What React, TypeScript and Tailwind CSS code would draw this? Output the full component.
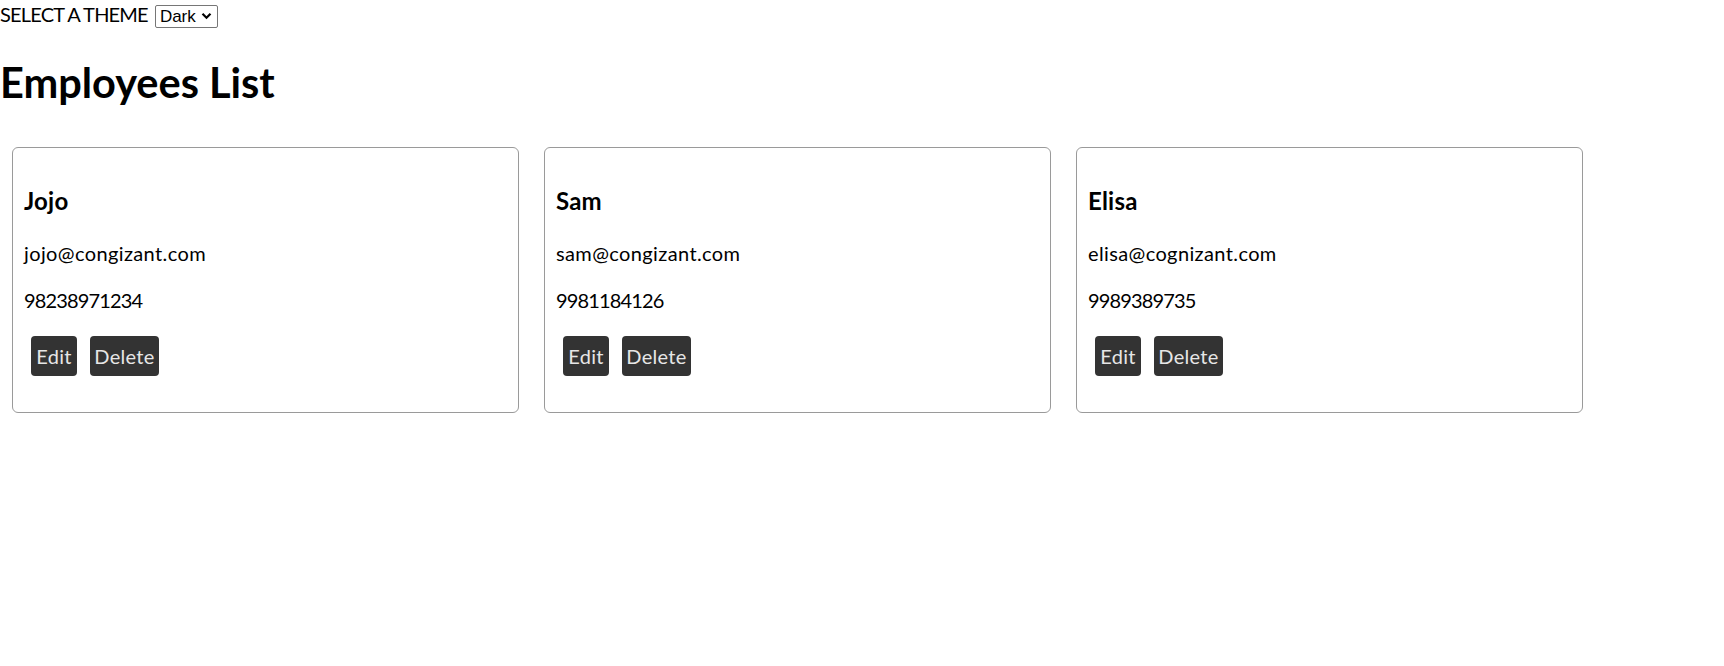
import React from "react";

const employees = [
  { name: "Jojo", email: "jojo@congizant.com", phone: "98238971234" },
  { name: "Sam", email: "sam@congizant.com", phone: "9981184126" },
  { name: "Elisa", email: "elisa@cognizant.com", phone: "9989389735" },
];

function Card({ e }: { e: (typeof employees)[number] }) {
  return (
    <div className="w-[507px] shrink-0 rounded-[6px] border border-[#9a9a9a] px-[11px] pt-[39px] pb-[36px]">
      <h3 className="text-[24px] leading-[28px] font-bold tracking-[0.2px]">{e.name}</h3>
      <p className="mt-[24px] text-[20px] leading-[28px] tracking-[0.38px]">{e.email}</p>
      <p className="mt-[19px] text-[20px] leading-[28px] tracking-[-0.85px]">{e.phone}</p>
      <div className="mt-[22px] flex gap-[13px] pl-[7px]">
        <button className="h-[40px] w-[46px] rounded-[4px] bg-[#333333] text-[20px] leading-[40px] tracking-[0.3px] text-[#e6e6e6]">
          Edit
        </button>
        <button className="h-[40px] w-[69px] rounded-[4px] bg-[#333333] text-[20px] leading-[40px] tracking-[0.3px] text-[#e6e6e6]">
          Delete
        </button>
      </div>
    </div>
  );
}

export default function App() {
  return (
    <div className="min-h-[666px] bg-white text-black font-['Lato','Noto_Sans',sans-serif]">
      <div className="flex h-[28px] items-center">
        <span className="text-[20px] leading-[28px] tracking-[-0.8px]">SELECT A THEME</span>
        <div className="ml-[7px] mt-[4px] flex h-[23px] w-[63px] items-center justify-between rounded-[2px] border border-[#767676] bg-white pl-[4px] pr-[5px] font-['Liberation_Sans',Arial,sans-serif] text-[17px] leading-[21px]">
          <span>Dark</span>
          <svg width="11" height="8" viewBox="0 0 11 8" fill="none">
            <path d="M1.5 1.8 L5.5 5.8 L9.5 1.8" stroke="#000" strokeWidth="2.2" />
          </svg>
        </div>
      </div>
      <h1 className="mt-[30px] text-[41.5px] leading-[48px] font-bold">Employees List</h1>
      <div className="mt-[41px] flex gap-[25px] pl-[12px]">
        {employees.map((e) => (
          <Card key={e.name} e={e} />
        ))}
      </div>
    </div>
  );
}
